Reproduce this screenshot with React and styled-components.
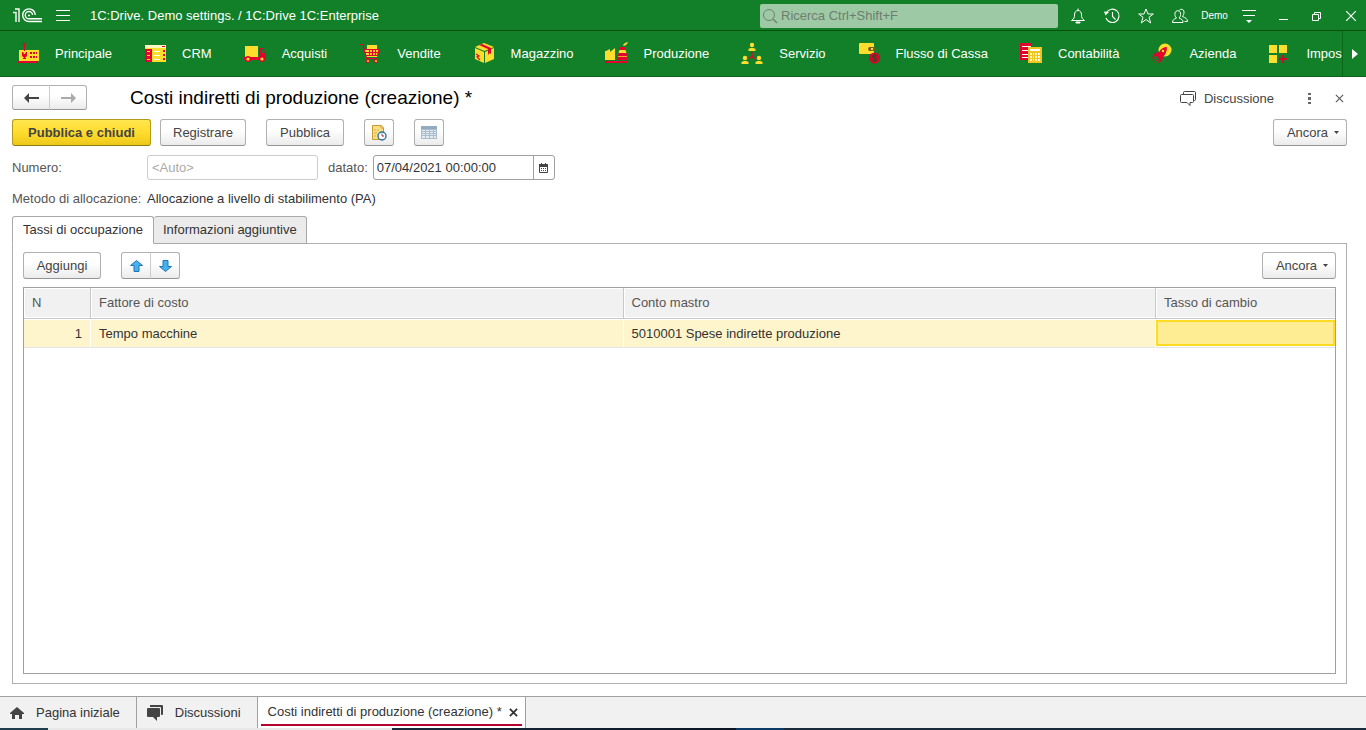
import React from 'react';
import styled, { createGlobalStyle, css } from 'styled-components';

const RED = '#e4032e';
const YELLOW = '#ffdd2d';
const CREAM = '#fff6c4';

const GlobalStyle = createGlobalStyle`
	* {
		box-sizing: border-box;
	}
	body {
		margin: 0;
		background: #fff;
		color: #333;
		font-family: 'Liberation Sans', Arial, sans-serif;
		font-size: 13px;
		line-height: 16px;
	}
	button,
	input {
		font: inherit;
		color: inherit;
		margin: 0;
	}
	button {
		cursor: pointer;
	}
	svg {
		display: block;
		flex: none;
	}
`;

/* ---------- section icons ---------- */

const MainIcon = () => (
	<svg width='24' height='24' viewBox='0 0 24 24'>
		<path d='M2 8h20v11H2z' fill={YELLOW} />
		<path d='M1 19h20v2H1z' fill={RED} />
		<circle cx='7.5' cy='3' r='1.7' fill={RED} />
		<path d='M7 4h1v5H7z' fill={RED} />
		<path d='M5 10h1l1 2h1l1-2h1v4q-2.500 3-5 0z' fill={RED} />
		<path d='M7 14h1v3H7zM6 16h3v1H6z' fill={RED} />
		<path
			d='M13 10h2v2h-2zM16 10h2v2h-2zM19 10h1v2h-1zM13 14h2v2h-2zM16 14h2v2h-2zM19 14h1v2h-1z'
			fill={RED}
		/>
	</svg>
);

const CrmIcon = () => (
	<svg width='24' height='24' viewBox='0 0 24 24'>
		<path d='M1 3h21v17H1z' fill={YELLOW} />
		<path d='M1 3h21v3H1z' fill={CREAM} />
		<path d='M18 4h3v1h-3z' fill={RED} />
		<path d='M1 7h7v13H1z' fill={RED} />
		<path d='M3 9h3v1H3zM3 13h3v1H3zM3 17h3v1H3z' fill={YELLOW} />
		<path d='M10 9h6v1h-6zM10 13h6v1h-6zM10 17h6v1h-6z' fill='#fff' />
		<path d='M19 8h2v2h-2zM19 12h2v2h-2zM19 16h2v2h-2z' fill={RED} />
	</svg>
);

const TruckIcon = () => (
	<svg width='24' height='24' viewBox='0 0 24 24'>
		<path d='M1 4h13v11H1z' fill={YELLOW} />
		<path d='M15 6h4l3 5v7H0v-3h15z' fill={RED} />
		<path d='M18 7h1l2 4h-3z' fill='#128028' />
		<circle cx='4' cy='17' r='3' fill={RED} />
		<circle cx='18' cy='17' r='3' fill={RED} />
		<circle cx='4' cy='17' r='1.6' fill={YELLOW} />
		<circle cx='18' cy='17' r='1.6' fill={YELLOW} />
	</svg>
);

const CartIcon = () => (
	<svg width='24' height='24' viewBox='0 0 24 24'>
		<path d='M8 3h10v5H8z' fill={YELLOW} />
		<path d='M6 8h14l-2 7H7z' fill={YELLOW} />
		<path
			d='M1 2.5h3l3.500 14H19M5.500 7.500H20l-1.500 6H7M6 10.500h13.500M10.500 7.500V14M13.500 7.500V14M16.500 7.500V14'
			fill='none'
			stroke={RED}
			strokeWidth='1.2'
		/>
		<circle cx='9' cy='19' r='2' fill={RED} />
		<circle cx='17' cy='19' r='2' fill={RED} />
		<circle cx='9' cy='19' r='1' fill={YELLOW} />
		<circle cx='17' cy='19' r='1' fill={YELLOW} />
	</svg>
);

const BoxIcon = () => (
	<svg width='24' height='24' viewBox='0 0 24 24'>
		<path d='M2 6l9 4v11l-9-4zM12 10l9-4v11l-9 4z' fill={YELLOW} />
		<path d='M2 5l9-4 10 4-9.500 4z' fill={YELLOW} />
		<path d='M6 3l3-1 9 4v6l-1.500-1-1.500 2V7z' fill={RED} />
		<path d='M3 12l3 2-2 1 3 3' fill='none' stroke={RED} strokeWidth='1.2' />
	</svg>
);

const FactoryIcon = () => (
	<svg width='24' height='24' viewBox='0 0 24 24'>
		<path d='M0 18V9h1l4-2v3l5-4v12z' fill={YELLOW} />
		<path d='M15 5h5l3 13H12z' fill={RED} />
		<path d='M14.500 8h6l1 3h-8z' fill={YELLOW} />
		<path d='M13 14h9v1h-9z' fill='#f4a42b' />
		<path d='M18 3l2-2 3-1-1 2-3 2z' fill={YELLOW} />
		<path d='M0 19h23v2H0z' fill={RED} />
	</svg>
);

const ServiceIcon = () => (
	<svg width='24' height='24' viewBox='0 0 24 24'>
		{[
			[11, 1],
			[4, 14],
			[18, 14],
		].map(([x, y]) => (
			<g key={x} fill={YELLOW}>
				<circle cx={x} cy={y + 2} r='2.2' />
				<path d={`M${x - 3.5} ${y + 8}v-2l2-1h3l2 1v2z`} />
			</g>
		))}
		<path d='M11 10v4l-3 3M11 14l3 3' fill='none' stroke={RED} strokeWidth='1.4' />
	</svg>
);

const WalletIcon = () => (
	<svg width='24' height='24' viewBox='0 0 24 24'>
		<path d='M1 2q0-1 1-1h13q1 0 1 1v10H2q-1 0-1-1z' fill={YELLOW} />
		<path d='M11 5h6v4h-6l-1-2z' fill='#6d5f22' />
		<path d='M13 6h2v2h-2z' fill={YELLOW} />
		<circle cx='16.500' cy='16' r='5.500' fill='#d4062a' />
		<path
			d='M18.500 14q-2-1.500-3.500-.3t1.500 2.300 1.500 2.300-3.500-.3M16.500 12v8'
			fill='none'
			stroke='#4c3a22'
			strokeWidth='1.1'
		/>
	</svg>
);

const AccountingIcon = () => (
	<svg width='24' height='24' viewBox='0 0 24 24'>
		<path d='M0 1h12v17H0z' fill={RED} />
		<path d='M2 4h9v1H2zM2 8h6v1H2zM2 12h6v1H2zM2 16h6v-1H2z' fill='#fff' />
		<path d='M8 5h14v16H8z' fill='#f0c51d' />
		<path d='M10 7h10v2H10z' fill='#fff' />
		<path
			d='M10 11h2v2h-2zM13 11h1v2h-1zM15 11h2v2h-2zM18 11h2v2h-2zM10 14h2v2h-2zM13 14h1v2h-1zM15 14h2v2h-2zM18 14h2v2h-2zM10 17h2v2h-2zM13 17h1v2h-1zM15 17h2v2h-2zM18 17h2v2h-2z'
			fill={CREAM}
		/>
	</svg>
);

const RocketIcon = () => (
	<svg width='24' height='24' viewBox='0 0 24 24'>
		<circle cx='14' cy='8' r='6.500' fill={YELLOW} />
		<path
			d='M16 5q-5 0-8 5l-4 1-2 4 4-1 2 3-1 4 4-2 1-4q4-4 4-10z'
			fill={RED}
		/>
		<circle cx='12' cy='9' r='1.3' fill={YELLOW} />
		<path d='M4 16l-3 3M6 18l-3 3M2 15l-1 1' stroke={RED} strokeDasharray='1 1' />
	</svg>
);

const SettingsIcon = () => (
	<svg width='24' height='24' viewBox='0 0 24 24'>
		<path d='M1 3h8v8H1zM11 3h8v8h-8zM1 13h8v8H1z' fill={YELLOW} />
		<path d='M14 13h2v3h3v2h-3v3h-2v-3h-3v-2h3z' fill='#d4062a' />
	</svg>
);

/* ---------- interface icons ---------- */

const LogoIcon = () => (
	<svg width='30' height='15' viewBox='0 0 30 15' fill='none' stroke='#fff' strokeWidth='1.4'>
		<path d='M0 4.500h3V14M2 1h4v13' />
		<path d='M22.300 7A6.300 6.300 0 1 0 16 13.500H29' />
		<path d='M19.500 7A3.600 3.600 0 1 0 16 10.700H29' />
		<path d='M15 7.500h2' />
	</svg>
);

const SearchIcon = () => (
	<svg width='16' height='16' viewBox='0 0 16 16' fill='none' stroke='#6e7f72'>
		<circle cx='7' cy='7' r='5.500' />
		<path d='M11 11l4 4' strokeWidth='1.3' />
	</svg>
);

const BurgerIcon = () => (
	<svg width='14' height='12' viewBox='0 0 14 12' fill='#fff'>
		<path d='M0 0h14v1H0zM0 5h14v1H0zM0 10h14v1H0z' />
	</svg>
);

const BellIcon = () => (
	<svg width='16' height='16' viewBox='0 0 16 16' fill='none' stroke='#fff'>
		<path d='M1.500 12.500h13c-2.500-1.500-3-3-3-5.500 0-3-1.500-4.500-3.500-4.500S4.500 4 4.500 7c0 2.500-.5 4-3 5.500zM8 .5v2' />
		<path d='M6 14h4v1H6z' fill='#fff' />
	</svg>
);

const HistoryIcon = () => (
	<svg width='16' height='16' viewBox='0 0 16 16' fill='none' stroke='#fff'>
		<path d='M2.500 4.500A6.700 6.700 0 1 1 2 10M8.500 4v4.500l3 3' strokeWidth='1.1' />
		<path d='M0 3.500l5 .5-3.500 3.500z' fill='#fff' stroke='none' />
	</svg>
);

const StarIcon = () => (
	<svg width='16' height='16' viewBox='0 0 16 16' fill='none' stroke='#fff'>
		<path d='M8 1l2 5h5.300l-4.300 3.300L12.700 15 8 11.500 3.300 15 5 9.300.7 6H6z' />
	</svg>
);

const UsersIcon = () => (
	<svg width='16' height='16' viewBox='0 0 16 16' fill='none' stroke='#fff'>
		<path d='M.5 14.500c0-3 1.500-3 4-4.500-1.500-1.500-1.800-3-1.500-5C3.500 2 8 2 8.500 5c.3 2 0 3.500-1.500 5 3 1.500 4 1.500 4 4.500z' />
		<path d='M7 2.500C8.500.5 12 1 12 4c0 2-.5 3-1.500 4.500 3 1.500 5 2 5 5h-3' />
	</svg>
);

const PanelMenuIcon = () => (
	<svg width='14' height='14' viewBox='0 0 14 14' fill='#fff'>
		<path d='M0 1h14v1H0zM1 6h12v1H1zM4 11h6l-3 3z' />
	</svg>
);

const MinimizeIcon = () => (
	<svg width='10' height='12' viewBox='0 0 10 12'>
		<path d='M1 9h9v1H1z' fill='#fff' />
	</svg>
);

const RestoreIcon = () => (
	<svg width='10' height='10' viewBox='0 0 10 10' fill='none' stroke='#fff'>
		<path d='M.5 3.500h6v6h-6zM2.500 3V1.500h6v6H7' />
	</svg>
);

const CrossIcon = ({ size = 10, width = 1.2 }) => (
	<svg width={size} height={size} viewBox='0 0 10 10' stroke='currentColor' strokeWidth={width}>
		<path d='M1 1l8 8M9 1L1 9' />
	</svg>
);

const PlayIcon = () => (
	<svg width='6' height='10' viewBox='0 0 6 10'>
		<path d='M0 0l6 5-6 5z' fill='#fff' />
	</svg>
);

const ArrowIcon = ({ color, flip }) => (
	<svg width='15' height='10' viewBox='0 0 15 10' fill={color}>
		<path d={flip ? 'M15 5l-5-5v4H0v2h10v4z' : 'M0 5l5-5v4h10v2H5v4z'} />
	</svg>
);

const MoveIcon = ({ down }) => (
	<svg width='13' height='12' viewBox='0 0 13 12' fill='#45b1f0' stroke='#2176ae'>
		<path
			d={
				down
					? 'M6.500 11.500L.5 6.500H4v-6h5v6h3.500z'
					: 'M6.500.5l6 5H9v6H4v-6H.5z'
			}
			strokeLinejoin='round'
		/>
	</svg>
);

const ReportIcon = () => (
	<svg width='16' height='16' viewBox='0 0 16 16'>
		<path d='M1.500.5h9l2 2v12h-11z' fill='#fbdf86' stroke='#c99a2a' />
		<path d='M10 .5V3h2.500' fill='#fff' stroke='#c99a2a' />
		<path d='M3 5h2M6 5h2M3 8h3M3 11h2' stroke='#d7b04c' />
		<circle cx='11' cy='11' r='4' fill='#fff' stroke='#32709c' strokeWidth='1.4' />
		<path d='M11 11V8.500' stroke='#32709c' />
		<path d='M11 11h2' stroke={RED} />
	</svg>
);

const ListIcon = () => (
	<svg width='16' height='14' viewBox='0 0 16 14'>
		<path d='M0 0h16v13H0z' fill='#a9bccb' />
		<path d='M0 0h16v3H0z' fill='#93abc0' />
		<path
			d='M1 4h3v1H1zM5 4h3v1H5zM9 4h3v1H9zM13 4h2v1h-2zM1 6h3v1H1zM5 6h3v1H5zM9 6h3v1H9zM13 6h2v1h-2zM1 8h3v1H1zM5 8h3v1H5zM9 8h3v1H9zM13 8h2v1h-2zM1 10h3v2H1zM5 10h3v2H5zM9 10h3v2H9zM13 10h2v2h-2z'
			fill='#e6edf2'
		/>
	</svg>
);

const CalendarIcon = () => (
	<svg width='9' height='10' viewBox='0 0 9 10'>
		<path d='M.5 1.500h8v8h-8z' fill='#fff' stroke='#444' />
		<path d='M0 1h9v3H0zM2 0h1v2H2zM6 0h1v2H6z' fill='#444' />
		<path d='M2 5h1v1H2zM4 5h1v1H4zM6 5h1v1H6zM2 7h1v1H2zM4 7h1v1H4zM6 7h1v1H6z' fill='#444' />
	</svg>
);

const ChatIcon = () => (
	<svg width='16' height='16' viewBox='0 0 16 16' fill='none' stroke='#444'>
		<path d='M3.500 3V1.500q0-1 1-1h10q1 0 1 1v7q0 1-1 1h-1' />
		<path d='M1.500 3.500h11q1 0 1 1v6q0 1-1 1H10v3l-3-3H1.500q-1 0-1-1v-6q0-1 1-1z' />
	</svg>
);

const ChatSolidIcon = () => (
	<svg width='16' height='16' viewBox='0 0 16 16' fill='#444'>
		<path d='M3 0h12q1 0 1 1v8q0 1-1 1h-1V3q0-1-1-1H3z' />
		<path d='M1 3h11q1 0 1 1v7q0 1-1 1h-2v4l-4-4H1q-1 0-1-1V4q0-1 1-1z' />
	</svg>
);

const HomeIcon = () => (
	<svg width='14' height='12' viewBox='0 0 14 12' fill='#444'>
		<path d='M7 0l7 6v1h-2v5H9V8H5v4H2V7H0V6z' />
	</svg>
);

const DotsIcon = () => (
	<svg width='3' height='11' viewBox='0 0 3 11' fill='#666'>
		<path d='M0 0h3v2H0zM0 4h3v3H0zM0 9h3v2H0z' />
	</svg>
);

const CaretIcon = () => (
	<svg width='5' height='3' viewBox='0 0 5 3'>
		<path d='M0 0h5L2.500 3z' fill='#444' />
	</svg>
);

const sections = [
	{ label: 'Principale', Icon: MainIcon },
	{ label: 'CRM', Icon: CrmIcon },
	{ label: 'Acquisti', Icon: TruckIcon },
	{ label: 'Vendite', Icon: CartIcon },
	{ label: 'Magazzino', Icon: BoxIcon },
	{ label: 'Produzione', Icon: FactoryIcon },
	{ label: 'Servizio', Icon: ServiceIcon },
	{ label: 'Flusso di Cassa', Icon: WalletIcon },
	{ label: 'Contabilità', Icon: AccountingIcon },
	{ label: 'Azienda', Icon: RocketIcon },
	{ label: 'Impostazioni', Icon: SettingsIcon },
];

const TitleBar = () => (
	<Header>
		<LogoIcon />
		<BarButton type='button' aria-label='Menu'>
			<BurgerIcon />
		</BarButton>
		<AppName>1C:Drive. Demo settings. / 1C:Drive 1C:Enterprise</AppName>
		<Search>
			<SearchIcon />
			<input type='search' aria-label='Ricerca' placeholder='Ricerca Ctrl+Shift+F' />
		</Search>
		<BarTools>
			<BarButton type='button' aria-label='Notifiche'>
				<BellIcon />
			</BarButton>
			<BarButton type='button' aria-label='Cronologia'>
				<HistoryIcon />
			</BarButton>
			<BarButton type='button' aria-label='Preferiti'>
				<StarIcon />
			</BarButton>
			<BarButton type='button' aria-label='Utente'>
				<UsersIcon />
			</BarButton>
			<UserName>Demo</UserName>
			<BarButton type='button' aria-label='Impostazioni'>
				<PanelMenuIcon />
			</BarButton>
			<BarButton type='button' aria-label='Riduci'>
				<MinimizeIcon />
			</BarButton>
			<BarButton type='button' aria-label='Ripristina'>
				<RestoreIcon />
			</BarButton>
			<BarButton type='button' aria-label='Chiudi'>
				<CrossIcon size={12} width={1} />
			</BarButton>
		</BarTools>
	</Header>
);

const SectionNav = () => (
	<Nav>
		<NavList>
			{sections.map(({ label, Icon }) => (
				<NavLink key={label} href='#'>
					<Icon />
					{label}
				</NavLink>
			))}
		</NavList>
		<NavMore type='button' aria-label='Avanti'>
			<PlayIcon />
		</NavMore>
	</Nav>
);

const MoreButton = () => (
	<MoreBtn type='button'>
		Ancora
		<CaretIcon />
	</MoreBtn>
);

const FormHeader = () => (
	<HeadRow>
		<BtnGroup>
			<ArrowButton type='button' aria-label='Indietro'>
				<ArrowIcon color='#444' />
			</ArrowButton>
			<ArrowButton type='button' aria-label='Avanti'>
				<ArrowIcon color='#aaa' flip />
			</ArrowButton>
		</BtnGroup>
		<Title>Costi indiretti di produzione (creazione) *</Title>
		<HeadTools>
			<PlainButton type='button'>
				<ChatIcon />
				Discussione
			</PlainButton>
			<IconButton type='button' aria-label='Altro'>
				<DotsIcon />
			</IconButton>
			<IconButton type='button' aria-label='Chiudi'>
				<CrossIcon size={9} />
			</IconButton>
		</HeadTools>
	</HeadRow>
);

const RatesTable = () => (
	<TableFrame>
		<Table>
			<colgroup>
				<col className='num' />
				<col />
				<col />
				<col className='rate' />
			</colgroup>
			<thead>
				<tr>
					<th scope='col'>N</th>
					<th scope='col'>Fattore di costo</th>
					<th scope='col'>Conto mastro</th>
					<th scope='col'>Tasso di cambio</th>
				</tr>
			</thead>
			<tbody>
				<tr>
					<td className='right'>1</td>
					<td>Tempo macchine</td>
					<td>5010001 Spese indirette produzione</td>
					<td className='active'>
						<CellInput type='text' aria-label='Tasso di cambio' />
					</td>
				</tr>
			</tbody>
		</Table>
	</TableFrame>
);

const App = () => {
	return (
		<Page>
			<GlobalStyle />
			<TitleBar />
			<SectionNav />
			<Main>
				<FormHeader />
				<Toolbar>
					<PrimaryButton type='button'>Pubblica e chiudi</PrimaryButton>
					<Button type='button'>Registrare</Button>
					<Spacer />
					<Button type='button'>Pubblica</Button>
					<Spacer />
					<SquareButton type='button' aria-label='Report'>
						<ReportIcon />
					</SquareButton>
					<Spacer />
					<SquareButton type='button' aria-label='Elenco'>
						<ListIcon />
					</SquareButton>
					<MoreButton />
				</Toolbar>
				<Fields>
					<FieldLabel htmlFor='number'>Numero:</FieldLabel>
					<NumberInput id='number' type='text' placeholder='<Auto>' />
					<DateLabel htmlFor='date'>datato:</DateLabel>
					<DateBox>
						<input id='date' type='text' defaultValue='07/04/2021 00:00:00' />
						<button type='button' aria-label='Calendario'>
							<CalendarIcon />
						</button>
					</DateBox>
				</Fields>
				<Method>
					<MethodLabel>Metodo di allocazione:</MethodLabel>
					<span>Allocazione a livello di stabilimento (PA)</span>
				</Method>
				<Tabs role='tablist'>
					<Tab type='button' role='tab' aria-selected='true' $active>
						Tassi di occupazione
					</Tab>
					<Tab type='button' role='tab' aria-selected='false'>
						Informazioni aggiuntive
					</Tab>
				</Tabs>
				<Panel role='tabpanel'>
					<PanelBar>
						<Button type='button'>Aggiungi</Button>
						<BtnGroup>
							<MoveButton type='button' aria-label='Sposta su'>
								<MoveIcon />
							</MoveButton>
							<MoveButton type='button' aria-label='Sposta giù'>
								<MoveIcon down />
							</MoveButton>
						</BtnGroup>
						<MoreButton />
					</PanelBar>
					<RatesTable />
				</Panel>
			</Main>
			<WindowTabs>
				<WindowTab>
					<button type='button'>
						<HomeIcon />
						Pagina iniziale
					</button>
				</WindowTab>
				<WindowTab>
					<button type='button'>
						<ChatSolidIcon />
						Discussioni
					</button>
				</WindowTab>
				<WindowTab $active>
					<button type='button'>Costi indiretti di produzione (creazione) *</button>
					<button type='button' aria-label='Chiudi scheda'>
						<CrossIcon size={9} width={2} />
					</button>
				</WindowTab>
			</WindowTabs>
			<Desktop />
		</Page>
	);
};

const Page = styled.div`
	display: flex;
	flex-direction: column;
	min-height: 100vh;
`;

const Header = styled.header`
	display: flex;
	align-items: center;
	height: 31px;
	padding: 1px 0 0 13px;
	background: #128028;
	border-bottom: 1px solid #0a4f0b;
	color: #fff;
`;

const BarButton = styled.button`
	display: flex;
	align-items: center;
	justify-content: center;
	flex: none;
	width: 30px;
	height: 28px;
	padding: 0;
	border: 0;
	background: transparent;
	color: #fff;
	${Header} > & {
		width: 40px;
	}
`;

const AppName = styled.span`
	flex: 1;
	padding-left: 7px;
	white-space: nowrap;
`;

const Search = styled.label`
	display: flex;
	align-items: center;
	width: 298px;
	height: 24px;
	padding-left: 2px;
	gap: 3px;
	background: #9dcaa5;
	border-radius: 2px;
	input {
		flex: 1;
		min-width: 0;
		padding: 0;
		border: 0;
		outline: 0;
		background: transparent;
	}
	input::placeholder {
		color: #6f7c71;
	}
`;

const BarTools = styled.div`
	display: flex;
	align-items: center;
	gap: 4px;
	padding-left: 5px;
`;

const UserName = styled.span`
	width: 31px;
	text-align: center;
	font-size: 10px;
`;

const Nav = styled.nav`
	display: flex;
	height: 46px;
	background: #128028;
	border-bottom: 1px solid #0b661c;
`;

const NavList = styled.div`
	display: flex;
	flex: 1;
	min-width: 0;
	overflow: hidden;
	gap: 32px;
	padding-left: 17px;
`;

const NavLink = styled.a`
	display: flex;
	align-items: center;
	flex: none;
	gap: 14px;
	color: #fff;
	text-decoration: none;
	white-space: nowrap;
`;

const NavMore = styled.button`
	display: flex;
	align-items: center;
	justify-content: center;
	width: 24px;
	padding: 0;
	border: 0;
	border-left: 1px solid #0b661c;
	background: transparent;
`;

const Main = styled.main`
	display: flex;
	flex-direction: column;
	flex: 1;
	padding: 8px 19px 12px 12px;
`;

const HeadRow = styled.div`
	display: flex;
	align-items: center;
	height: 25px;
`;

const buttonBase = css`
	display: flex;
	align-items: center;
	justify-content: center;
	height: 27px;
	padding: 0 12px;
	border: 1px solid #b0b0b0;
	border-bottom-color: #949494;
	border-radius: 3px;
	background: linear-gradient(#fff 40%, #ebebeb);
	color: #444;
	white-space: nowrap;
`;

const Button = styled.button`
	${buttonBase}
	min-width: 78px;
`;

const PrimaryButton = styled.button`
	${buttonBase}
	min-width: 139px;
	border-color: #b39a1a;
	border-bottom-color: #8f7a10;
	background: linear-gradient(#ffe650, #ffdc2d 50%, #edc81c);
	font-weight: bold;
`;

const SquareButton = styled.button`
	${buttonBase}
	width: 30px;
	padding: 0;
`;

const MoreBtn = styled.button`
	${buttonBase}
	gap: 6px;
	min-width: 74px;
	margin-left: auto;
	padding: 0 6px 0 12px;
`;

const BtnGroup = styled.div`
	display: flex;
	button + button {
		border-left-color: #ccc;
		border-radius: 0 3px 3px 0;
		margin-left: -1px;
	}
	button:first-child {
		border-radius: 3px 0 0 3px;
	}
`;

const ArrowButton = styled.button`
	${buttonBase}
	width: 38px;
	height: 25px;
	padding: 0;
`;

const MoveButton = styled.button`
	${buttonBase}
	width: 30px;
	padding: 0;
`;

const Title = styled.h1`
	flex: 1;
	margin: 0 0 0 43px;
	font-size: 19px;
	line-height: 24px;
	font-weight: normal;
	color: #000;
`;

const HeadTools = styled.div`
	display: flex;
	align-items: center;
	padding-top: 2px;
`;

const PlainButton = styled.button`
	display: flex;
	align-items: center;
	gap: 8px;
	margin-right: 20px;
	padding: 0;
	border: 0;
	background: transparent;
	color: #444;
`;

const IconButton = styled.button`
	display: flex;
	align-items: center;
	justify-content: center;
	width: 30px;
	height: 24px;
	padding: 0;
	border: 0;
	background: transparent;
	color: #555;
	&:last-child {
		width: 16px;
		margin-left: 7px;
	}
`;

const Toolbar = styled.div`
	display: flex;
	gap: 9px;
	margin-top: 9px;
`;

const Spacer = styled.span`
	width: 2px;
`;

const Fields = styled.div`
	display: flex;
	align-items: center;
	margin-top: 9px;
`;

const FieldLabel = styled.label`
	width: 135px;
	color: #555;
`;

const inputBox = css`
	height: 25px;
	border: 1px solid #a0a0a0;
	border-radius: 3px;
	background: #fff;
`;

const NumberInput = styled.input`
	${inputBox}
	width: 171px;
	padding: 0 4px;
	border-color: #ccc;
	&::placeholder {
		color: #aaa;
	}
`;

const DateLabel = styled.label`
	margin: 0 5px 0 10px;
	color: #555;
`;

const DateBox = styled.div`
	${inputBox}
	display: flex;
	width: 182px;
	input {
		flex: 1;
		min-width: 0;
		padding: 0 3px;
		border: 0;
		outline: 0;
		background: transparent;
	}
	button {
		display: flex;
		align-items: center;
		justify-content: center;
		width: 21px;
		padding: 0;
		border: 0;
		border-left: 1px solid #a0a0a0;
		background: transparent;
	}
`;

const Method = styled.div`
	display: flex;
	margin-top: 11px;
`;

const MethodLabel = styled.span`
	width: 135px;
	color: #555;
	white-space: nowrap;
`;

const Tabs = styled.div`
	display: flex;
	margin-top: 9px;
	height: 28px;
	z-index: 1;
`;

const Tab = styled.button`
	height: 28px;
	padding: 0 ${({ $active }) => ($active ? 10 : 9)}px;
	border: 1px solid #a8a8a8;
	border-bottom-color: ${({ $active }) => ($active ? '#fff' : '#a8a8a8')};
	border-radius: 3px 3px 0 0;
	background: ${({ $active }) => ($active ? '#fff' : '#ebebeb')};
	& + & {
		border-left: 0;
	}
`;

const Panel = styled.section`
	display: flex;
	flex-direction: column;
	flex: 1;
	margin-top: -1px;
	padding: 8px 10px 9px;
	border: 1px solid #b0b0b0;
`;

const PanelBar = styled.div`
	display: flex;
	gap: 20px;
`;

const TableFrame = styled.div`
	flex: 1;
	margin-top: 8px;
	border: 1px solid #a0a0a0;
`;

const Table = styled.table`
	width: 100%;
	table-layout: fixed;
	border-collapse: separate;
	border-spacing: 0;
	.num {
		width: 67px;
	}
	.rate {
		width: 179px;
	}
	th,
	td {
		padding: 0 8px;
		text-align: left;
		font-weight: normal;
	}
	th {
		height: 31px;
		background: #f1f1f1;
		border-right: 1px solid #c8c8c8;
		border-bottom: 1px solid #c8c8c8;
		box-shadow: inset 1px 1px #fff, inset 0 -1px #fff;
		color: #555;
	}
	th:last-child {
		border-right: 0;
	}
	td {
		height: 29px;
		padding-top: 1px;
		background: #fff5cc;
		border-right: 1px solid #fff;
		border-bottom: 1px solid #e4e4e4;
		box-shadow: inset 0 1px #fff;
	}
	td.right {
		text-align: right;
	}
	td.active {
		padding: 0;
		border-right: 0;
		background: #fff;
	}
`;

const CellInput = styled.input`
	display: block;
	width: 100%;
	height: 26px;
	padding: 0 6px;
	border: 2px solid #ffdb24;
	outline: 0;
	background: #ffed94;
`;

const WindowTabs = styled.div`
	display: flex;
	height: 32px;
	background: #f1f1f1;
	border-top: 1px solid #a0a0a0;
`;

const WindowTab = styled.div`
	display: flex;
	padding: 0 ${({ $active }) => ($active ? 3 : 10)}px;
	border-right: 1px solid #a0a0a0;
	background: ${({ $active }) => ($active ? '#fff' : 'transparent')};
	button {
		display: flex;
		align-items: center;
		gap: 12px;
		padding: 0;
		border: 0;
		background: transparent;
	}
	& > button:first-child {
		padding-right: 6px;
	}
	${({ $active }) =>
		$active &&
		css`
			button {
				height: 29px;
				border-bottom: 2px solid #b3002d;
			}
			& > button:first-child {
				padding: 3px 7px 0;
			}
			& > button:last-child {
				padding: 3px 4px 0 0;
			}
		`}
`;

const Desktop = styled.div`
	height: 2px;
	background: linear-gradient(
		90deg,
		#1f3d4d 48px,
		#e8e8e8 48px,
		#e8e8e8 392px,
		#1a2b3c 392px,
		#0b1524 736px,
		#0b3a66 736px,
		#0b3a66 784px,
		#1a2b3c 784px
	);
`;

export default App;
